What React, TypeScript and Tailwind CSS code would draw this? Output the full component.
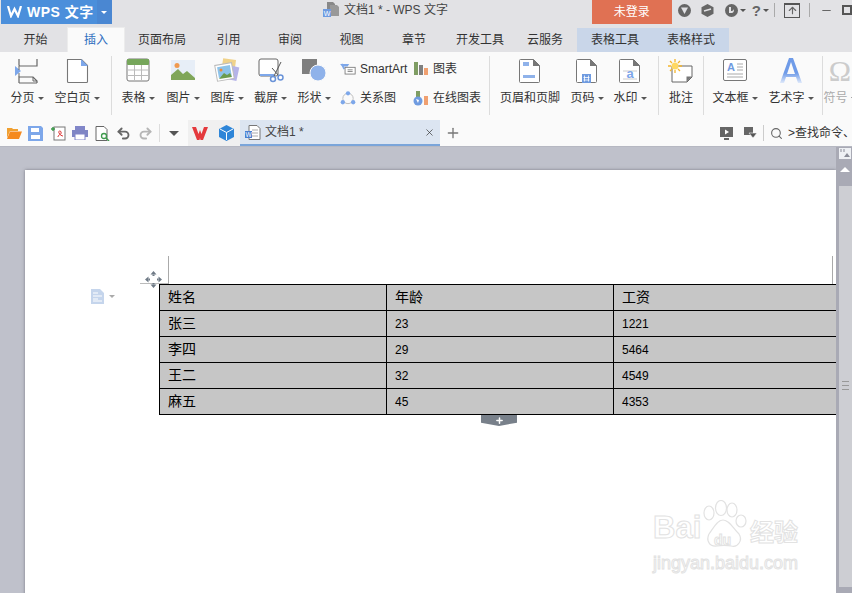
import React from 'react';
import { Plus, X, Search, Undo2, Redo2, ArrowUp, Minus } from 'lucide-react';

const CJK = "font-['Liberation_Sans','Noto_Sans_CJK_SC',sans-serif]";

const tabs = [
  { name: '开始', w: 'w-[63px]' },
  { name: '插入', w: 'w-[58px]', active: true },
  { name: '页面布局', w: 'w-[74px]' },
  { name: '引用', w: 'w-[59px]' },
  { name: '审阅', w: 'w-[64px]' },
  { name: '视图', w: 'w-[59px]' },
  { name: '章节', w: 'w-[66px]' },
  { name: '开发工具', w: 'w-[66px]' },
  { name: '云服务', w: 'w-[64px]' },
  { name: '表格工具', w: 'w-[76px]', context: true },
  { name: '表格样式', w: 'w-[76px]', context: true },
];

const rows = [
  ['姓名', '年龄', '工资'],
  ['张三', '23', '1221'],
  ['李四', '29', '5464'],
  ['王二', '32', '4549'],
  ['麻五', '45', '4353'],
];

function Caret({ className = '' }: { className?: string }) {
  return <span className={`inline-block w-0 h-0 border-x-[3px] border-x-transparent border-t-[3px] border-t-[#555] ${className}`} />;
}

function Ico({ children }: { children: React.ReactNode }) {
  return (
    <svg width="26" height="26" viewBox="0 0 26 26" fill="none">
      {children}
    </svg>
  );
}

function PageBreakIcon() {
  return (
    <Ico>
      <path d="M5 1v6a1 1 0 0 0 1 1h17V1M5 25v-6h14l4 4v2" stroke="#666" strokeWidth="1.2" />
      <path d="M5 25h18M19 19v4h4" stroke="#666" strokeWidth="1" />
      <path d="M1 8l6 5-6 5z" fill="#7da7ea" />
      <path d="M5 8v4M5 15v4" stroke="#666" />
    </Ico>
  );
}

function BlankPageIcon() {
  return (
    <Ico>
      <path d="M3.5 1.5h14l6 6v16a1 1 0 0 1-1 1h-18a1 1 0 0 1-1-1z" fill="#fff" stroke="#777" strokeWidth="1.1" />
      <path d="M17 1l7 7h-7z" fill="#7da7ea" />
    </Ico>
  );
}

function TableIcon() {
  return (
    <Ico>
      <rect x="2" y="1" width="22" height="22" rx="2" fill="#fff" stroke="#777" />
      <rect x="2" y="1" width="22" height="6" rx="1" fill="#76a65b" />
      <path d="M2 12h22M2 17.500h22M9.500 7v16M16.500 7v16" stroke="#bbb" />
    </Ico>
  );
}

function PictureIcon() {
  return (
    <Ico>
      <rect x="1" y="2" width="24" height="20" fill="#e7eef7" />
      <circle cx="7" cy="7.500" r="2.500" fill="#f09a50" />
      <path d="M1 22v-5l7-6 5 5 4-3 8 7v2z" fill="#7fa659" />
    </Ico>
  );
}

function GalleryIcon() {
  return (
    <Ico>
      <rect x="8" y="1" width="13" height="17" fill="#f0d28a" transform="rotate(8 14 9)" />
      <rect x="13" y="8" width="11" height="14" fill="#b5b3e8" transform="rotate(12 18 15)" />
      <rect x="2" y="6" width="17" height="16" fill="#fff" stroke="#bbb" transform="rotate(-10 10 14)" />
      <rect x="4" y="8" width="13" height="11" fill="#8dc3ea" transform="rotate(-10 10 14)" />
      <circle cx="7" cy="12" r="1.500" fill="#ee8b3c" />
      <path d="M5 21l5-6 3 2 3-2 2 4z" fill="#6b9b4e" />
    </Ico>
  );
}

function ScreenshotIcon() {
  return (
    <Ico>
      <rect x="1" y="1" width="19" height="17" rx="2" fill="#fff" stroke="#666" />
      <path d="M2 17h14" stroke="#7da7ea" strokeWidth="2" />
      <path d="M23 4l-7 14M14 10l7 8" stroke="#555" />
      <circle cx="15" cy="21" r="2.500" stroke="#6a93d8" strokeWidth="1.500" fill="#fff" />
      <circle cx="22.500" cy="19.500" r="2.500" stroke="#6a93d8" strokeWidth="1.500" fill="#fff" />
    </Ico>
  );
}

function ShapeIcon() {
  return (
    <Ico>
      <rect x="1" y="1" width="15" height="15" fill="#7f7f7f" />
      <circle cx="17" cy="15" r="8" fill="#8fb2ea" stroke="#fafafa" />
    </Ico>
  );
}

function HeaderFooterIcon() {
  return (
    <Ico>
      <path d="M3.500 1.500h13l6 6v16a1 1 0 0 1-1 1h-18a1 1 0 0 1-1-1v-21a1 1 0 0 1 1-1z" fill="#fff" stroke="#777" />
      <path d="M16 1l7 7h-7z" fill="#777" />
      <rect x="6" y="4" width="6" height="4" fill="#8fb2ea" />
      <rect x="6" y="17" width="12" height="3" fill="#8fb2ea" />
    </Ico>
  );
}

function PageNumberIcon() {
  return (
    <Ico>
      <path d="M3.500 1.500h13l6 6v16a1 1 0 0 1-1 1h-18a1 1 0 0 1-1-1v-21a1 1 0 0 1 1-1z" fill="#fff" stroke="#777" />
      <path d="M16 1l7 7h-7z" fill="#777" />
      <rect x="8" y="16" width="9" height="9" fill="#6f9be0" />
      <path d="M10.500 17.500v6M14.500 17.500v6M9.500 19.500h6M9.500 22h6" stroke="#fff" strokeWidth=".8" />
    </Ico>
  );
}

function WatermarkIcon() {
  return (
    <Ico>
      <path d="M3.500 1.500h13l6 6v16a1 1 0 0 1-1 1h-18a1 1 0 0 1-1-1v-21a1 1 0 0 1 1-1z" fill="#fff" stroke="#777" />
      <path d="M16 1l7 7h-7z" fill="#777" />
      <path d="M6 13h14M6 21h14" stroke="#ccc" />
      <text x="13" y="20" textAnchor="middle" fontSize="13" fontWeight="700" fill="#7da7ea" fontFamily="Liberation Sans">a</text>
    </Ico>
  );
}

function CommentIcon() {
  return (
    <Ico>
      <path d="M4 8h20v11l-5 5H4z" fill="#fff" stroke="#666" />
      <path d="M18.500 24v-5.500H24z" fill="#777" />
      <circle cx="7" cy="8" r="3.500" fill="#ffd862" />
      <path d="M7 1v3M7 12v3M0 8h3M11 8h3M2 3l2 2M10 11l2 2M12 3l-2 2M2 13l2-2" stroke="#f5b52c" strokeWidth="1.300" />
    </Ico>
  );
}

function TextBoxIcon() {
  return (
    <Ico>
      <rect x="1.500" y="1.500" width="23" height="21" rx="1.500" fill="#fff" stroke="#777" />
      <text x="5" y="13" fontSize="11" fontWeight="700" fill="#6f9be0" fontFamily="Liberation Sans">A</text>
      <path d="M15 6h6M15 9h6M15 12h6M5 16h16M5 19h16" stroke="#aaa" />
    </Ico>
  );
}

function WordArtIcon() {
  return (
    <Ico>
      <defs>
        <linearGradient id="wa" x1="0" y1="0" x2="0" y2="1">
          <stop offset="0.600" stopColor="#6f9be8" />
          <stop offset="1" stopColor="#dfe9fa" />
        </linearGradient>
      </defs>
      <path d="M11 0h4l9 25h-4l-2-6H8l-2 6H2zM13 4l-4 12h8z" fill="url(#wa)" />
    </Ico>
  );
}

function SmartArtIcon() {
  return (
    <svg width="19" height="14" viewBox="0 0 19 14" fill="none">
      <path d="M0 1h11l-2 3H3z" fill="#7da7ea" />
      <path d="M2 1l3 6" stroke="#7da7ea" strokeWidth="2" />
      <rect x="6" y="5" width="12" height="8" fill="#fff" stroke="#777" />
      <path d="M9 8h6M9 10h6" stroke="#777" />
    </svg>
  );
}

function RelationIcon() {
  return (
    <svg width="17" height="16" viewBox="0 0 17 16" fill="none">
      <circle cx="8.500" cy="8.500" r="5.500" stroke="#bbb" />
      <circle cx="8.500" cy="3" r="2.300" fill="#7da7ea" />
      <circle cx="3" cy="12.500" r="2.300" fill="#7da7ea" />
      <circle cx="14" cy="12.500" r="2.300" fill="#7da7ea" />
    </svg>
  );
}

function BarsIcon() {
  return (
    <svg width="15" height="14" viewBox="0 0 15 14">
      <rect x="0" y="0" width="4" height="13" fill="#7f9d63" />
      <rect x="5" y="3" width="4" height="10" fill="#808080" />
      <rect x="10" y="6" width="4" height="7" fill="#f0a070" />
    </svg>
  );
}

function OnlineBarsIcon() {
  return (
    <svg width="16" height="16" viewBox="0 0 16 16">
      <rect x="3" y="1" width="4" height="10" fill="#7f9d63" />
      <rect x="11" y="6" width="4" height="9" fill="#f0a070" />
      <circle cx="5" cy="11" r="4.500" fill="#6f9be0" />
      <path d="M3 9l3 1-1 3z" fill="#fff" />
    </svg>
  );
}

function RibbonButton({ w, icon, label, caret = true, muted = false }: { w: string; icon: React.ReactNode; label: string; caret?: boolean; muted?: boolean }) {
  return (
    <div className={`${w} shrink-0 flex flex-col items-center pt-[6px]`}>
      <div className="h-[26px] flex items-center">{icon}</div>
      <div className={`mt-[5px] h-[18px] flex items-center gap-[3px] text-[12px] whitespace-nowrap ${muted ? 'text-[#aaa]' : 'text-[#333]'}`}>
        {label}
        {caret && <Caret />}
      </div>
    </div>
  );
}

function Divider() {
  return <div className="w-px h-[59px] mt-[4px] bg-[#dcdcdc] shrink-0" />;
}

function SmallRow({ icon, label }: { icon: React.ReactNode; label: string }) {
  return (
    <div className="h-[29px] flex items-center gap-[4px] text-[12px] text-[#333] whitespace-nowrap">
      <span className="w-[16px] flex justify-center">{icon}</span>
      {label}
    </div>
  );
}

function OpenIcon() {
  return (
    <svg width="16" height="14" viewBox="0 0 16 14">
      <path d="M1 2h5l1 1h5v2H4l-3 7z" fill="#f0a030" />
      <path d="M4 5.500h12L13 13H1z" fill="#f58a1f" />
    </svg>
  );
}

function SaveIcon() {
  return (
    <svg width="15" height="15" viewBox="0 0 15 15">
      <path d="M0 0h13l2 2v13H0z" fill="#7da7ea" />
      <rect x="3" y="2" width="8" height="4" fill="#fff" />
      <rect x="3" y="9" width="9" height="4" fill="#fff" />
    </svg>
  );
}

function PdfIcon() {
  return (
    <svg width="16" height="15" viewBox="0 0 16 15" fill="none">
      <rect x="4" y="1" width="11" height="13" fill="#fff" stroke="#777" />
      <path d="M3 1v4M1 3h4" stroke="#3f9a4d" strokeWidth="1.500" />
      <path d="M8 11c0-3 4-2 3-5-.5-2-3-1-2 1 1 2 3 3 4 3" stroke="#d33" />
    </svg>
  );
}

function PrintIcon() {
  return (
    <svg width="16" height="14" viewBox="0 0 16 14">
      <rect x="3" y="0" width="10" height="4" fill="#8186c8" />
      <rect x="0" y="4" width="16" height="7" fill="#7f85c4" />
      <rect x="3" y="8" width="10" height="6" fill="#fff" stroke="#8186c8" />
    </svg>
  );
}

function PreviewIcon() {
  return (
    <svg width="15" height="15" viewBox="0 0 15 15" fill="none">
      <path d="M1 .500h8l3 3v11H1z" fill="#fff" stroke="#666" />
      <circle cx="9" cy="10" r="2.500" stroke="#3f9a4d" strokeWidth="1.300" />
      <path d="M11 12l3 3" stroke="#3f9a4d" strokeWidth="1.500" />
    </svg>
  );
}

function WLogo() {
  return (
    <svg width="16" height="13" viewBox="0 0 16 13">
      <path d="M0 0h4l2.500 7L8 3l1.500 4L12 0h4l-5 13H8.500L8 11l-.5 2H5z" fill="#e4393c" />
    </svg>
  );
}

function CubeIcon() {
  return (
    <svg width="15" height="16" viewBox="0 0 15 16">
      <path d="M7.500 0L15 4v8l-7.500 4L0 12V4z" fill="#2f86d8" />
      <path d="M1 4l6.500 3.500L14 4M7.500 7.500V15" stroke="#fff" fill="none" />
    </svg>
  );
}

function DocTabIcon() {
  return (
    <svg width="16" height="15" viewBox="0 0 16 15" fill="none">
      <path d="M4 .500h8l3 3v11H4z" fill="#fff" stroke="#777" />
      <path d="M7 5h6M7 8h6M7 11h6" stroke="#aaa" />
      <rect x="0" y="6" width="7" height="7" fill="#4a7fd0" />
      <text x="3.500" y="12" textAnchor="middle" fontSize="6.500" fill="#fff" fontFamily="Liberation Sans">W</text>
    </svg>
  );
}

function TitleDocIcon() {
  return (
    <svg width="16" height="16" viewBox="0 0 16 16">
      <path d="M4 0h6l2 2v6H4z" fill="#888" />
      <path d="M7 3h7l2 2v9H7z" fill="#999" />
      <rect x="0" y="7" width="8" height="8" fill="#6f9be0" />
      <text x="4" y="14" textAnchor="middle" fontSize="7" fill="#fff" fontFamily="Liberation Sans">W</text>
    </svg>
  );
}

function MoveHandle() {
  return (
    <svg width="17" height="17" viewBox="0 0 17 17" fill="#6f7a86">
      <path d="M8.500 0l3 3.500h-6zM8.500 17l3-3.500h-6zM0 8.500l3.500-3v6zM17 8.500l-3.500-3v6z" />
      <path d="M8.500 5v7M5 8.500h7" stroke="#fff" strokeWidth="0" />
      <rect x="7.500" y="3.500" width="2" height="1.500" />
      <rect x="7.500" y="12" width="2" height="1.500" />
      <rect x="3.500" y="7.500" width="1.500" height="2" />
      <rect x="12" y="7.500" width="1.500" height="2" />
    </svg>
  );
}

export default function App() {
  return (
    <div className={`${CJK} w-[852px] h-[593px] overflow-hidden flex flex-col bg-[#e2e2e5] text-[12px]`}>
      {/* Title bar */}
      <div className="h-[28px] flex items-start shrink-0">
        <div className="w-[111px] h-[24px] ml-px flex bg-[#4b8fdb] text-white">
          <div className="w-[96px] flex items-center gap-[5px] pl-[6px] text-[14px] font-bold tracking-[0.5px] whitespace-nowrap">
            <svg width="15" height="12" viewBox="0 0 15 12" fill="none">
              <path d="M1 0l3 10 3.500-7L11 10l3-10" stroke="#fff" strokeWidth="2.200" />
            </svg>
            WPS 文字
          </div>
          <div className="flex-1 bg-[#4a87d2] flex items-center justify-center">
            <span className="w-0 h-0 border-x-[3px] border-x-transparent border-t-[3px] border-t-white" />
          </div>
        </div>
        <div className="ml-[211px] h-[20px] flex items-center gap-[5px] text-[12px] text-[#444] whitespace-nowrap">
          <TitleDocIcon />
          文档1 * - WPS 文字
        </div>
        <div className="ml-[144px] w-[80px] h-[24px] bg-[#e07153] text-white flex items-center justify-center text-[12px]">未登录</div>
        <div className="flex items-center h-[20px] text-[#666]">
          <svg className="ml-[6px]" width="13" height="13" viewBox="0 0 13 13">
            <circle cx="6.500" cy="6.500" r="6.500" fill="#666" />
            <path d="M3 3.500h7L6.500 10z" fill="#e2e2e5" />
          </svg>
          <svg className="ml-[10px]" width="13" height="13" viewBox="0 0 13 13">
            <path d="M6.500 0l6 3.200v6.600l-6 3.200-6-3.200V3.200z" fill="#666" />
            <path d="M3 7l7-2" stroke="#e2e2e5" strokeWidth="1.500" />
          </svg>
          <svg className="ml-[11px]" width="13" height="13" viewBox="0 0 13 13">
            <circle cx="6.500" cy="6.500" r="6.500" fill="#666" />
            <path d="M4 3v6h2c3 0 3-2 3-4-1 2-2 2-3 2V3z" fill="#e2e2e5" />
          </svg>
          <Caret className="ml-[2px]" />
          <span className="ml-[6px] text-[15px] font-bold leading-none">?</span>
          <Caret className="ml-[2px]" />
          <div className="w-px h-[14px] bg-[#aaa] ml-[5px]" />
          <div className="ml-[9px] w-[16px] h-[15px] border border-[#555] border-t-2 flex items-center justify-center">
            <ArrowUp size={11} strokeWidth={2.500} />
          </div>
          <div className="w-px h-[14px] bg-[#aaa] ml-[9px]" />
          <Minus size={13} strokeWidth={2} className="ml-[10px]" />
          <div className="ml-[9px] w-[10px] h-[10px] border-2 border-[#555] shrink-0" />
        </div>
      </div>

      {/* Tabs */}
      <div className="h-[24px] flex pl-[4px] shrink-0 text-[12px] text-[#333]">
        {tabs.map((t) => (
          <div
            key={t.name}
            className={`${t.w} h-[24px] flex items-center justify-center ${t.active ? 'bg-[#fafafa] text-[#2f6fc0] border-x border-t border-[#ececec] -mt-px h-[25px]' : ''} ${t.context ? 'bg-[#c9d6e9]' : ''}`}
          >
            {t.name}
          </div>
        ))}
      </div>

      {/* Ribbon */}
      <div className="h-[68px] bg-[#fafafa] flex pl-[2px] shrink-0">
        <RibbonButton w="w-[50px]" icon={<PageBreakIcon />} label="分页" />
        <RibbonButton w="w-[50px]" icon={<BlankPageIcon />} label="空白页" />
        <div className="w-[9px] shrink-0" />
        <Divider />
        <div className="w-[4px] shrink-0" />
        <RibbonButton w="w-[44px]" icon={<TableIcon />} label="表格" />
        <div className="w-px shrink-0" />
        <RibbonButton w="w-[44px]" icon={<PictureIcon />} label="图片" />
        <RibbonButton w="w-[44px]" icon={<GalleryIcon />} label="图库" />
        <RibbonButton w="w-[43px]" icon={<ScreenshotIcon />} label="截屏" />
        <RibbonButton w="w-[44px]" icon={<ShapeIcon />} label="形状" />
        <div className="w-[77px] shrink-0 pl-[4px] pt-[2px]">
          <SmallRow icon={<SmartArtIcon />} label="SmartArt" />
          <SmallRow icon={<RelationIcon />} label="关系图" />
        </div>
        <div className="w-[76px] shrink-0 pl-[0px] pt-[2px]">
          <SmallRow icon={<BarsIcon />} label="图表" />
          <SmallRow icon={<OnlineBarsIcon />} label="在线图表" />
        </div>
        <Divider />
        <RibbonButton w="w-[80px]" icon={<HeaderFooterIcon />} label="页眉和页脚" caret={false} />
        <RibbonButton w="w-[34px]" icon={<PageNumberIcon />} label="页码" />
        <RibbonButton w="w-[52px]" icon={<WatermarkIcon />} label="水印" />
        <div className="w-[2px] shrink-0" />
        <Divider />
        <RibbonButton w="w-[44px]" icon={<CommentIcon />} label="批注" caret={false} />
        <Divider />
        <RibbonButton w="w-[62px]" icon={<TextBoxIcon />} label="文本框" />
        <RibbonButton w="w-[50px]" icon={<WordArtIcon />} label="艺术字" />
        <div className="w-[6px] shrink-0" />
        <Divider />
        <RibbonButton
          w="w-[34px]"
          label="符号"
          muted
          icon={<span className="text-[30px] leading-none text-[#ccc] font-['Liberation_Serif',serif]">Ω</span>}
        />
      </div>

      {/* Quick access + document tabs */}
      <div className="h-[26px] bg-[#fafafa] flex items-stretch shrink-0">
        <div className="w-[188px] flex items-center shrink-0 pl-[6px] text-[#777]">
          <OpenIcon />
          <span className="ml-[6px] flex"><SaveIcon /></span>
          <span className="ml-[7px] flex"><PdfIcon /></span>
          <span className="ml-[6px] flex"><PrintIcon /></span>
          <span className="ml-[7px] flex"><PreviewIcon /></span>
          <Undo2 size={15} strokeWidth={3} className="ml-[6px] text-[#666]" />
          <Redo2 size={15} strokeWidth={3} className="ml-[7px] text-[#b5b5b5]" />
          <div className="w-px h-[18px] bg-[#ddd] ml-[6px]" />
          <span className="ml-[9px] w-0 h-0 border-x-[5px] border-x-transparent border-t-[5px] border-t-[#555]" />
        </div>
        <div className="w-[52px] bg-[#f0f0f0] flex items-center shrink-0 pl-[4px] gap-[11px]">
          <WLogo />
          <CubeIcon />
        </div>
        <div className="w-[200px] bg-[#dce5f1] border-b-2 border-[#7aa5da] flex items-center pl-[5px] pr-[5px] gap-[4px] text-[#444] shrink-0">
          <DocTabIcon />
          <span className="flex-1">文档1 *</span>
          <X size={11} strokeWidth={1.500} className="text-[#333]" />
        </div>
        <div className="w-[26px] flex items-center justify-center shrink-0">
          <Plus size={16} strokeWidth={2} className="text-[#777]" />
        </div>
        <div className="flex-1 flex items-center justify-end min-w-0 overflow-hidden whitespace-nowrap">
          <svg width="13" height="13" viewBox="0 0 13 13">
            <rect x="0" y="0" width="13" height="10" fill="#666" />
            <path d="M5 2.500l4 2.500-4 2.500z" fill="#fff" />
            <path d="M4 12h5" stroke="#666" strokeWidth="2" />
          </svg>
          <svg className="ml-[11px]" width="13" height="12" viewBox="0 0 13 12">
            <path d="M0 0h9v8H0z" fill="#666" />
            <path d="M5 6h8l-4 5z" fill="#555" stroke="#fafafa" strokeWidth=".6" />
          </svg>
          <div className="w-px h-[16px] bg-[#ccc] ml-[6px]" />
          <Search size={13} className="ml-[6px] text-[#666]" />
          <span className="ml-[5px] w-[64px] overflow-hidden text-[#333]">&gt;查找命令、</span>
        </div>
      </div>

      {/* Workspace */}
      <div className="flex-1 min-h-0 flex bg-[#bfc1cb] border-t border-[#b6b8c2]">
        <div className="w-[836px] shrink-0 pl-[25px] pt-[23px] overflow-hidden">
          <div className="relative w-[811px] h-[500px] bg-white shadow-[0_0_3px_rgba(90,90,100,0.7)] pt-[114px] pl-[134px]">
            {/* crop marks */}
            <div className="absolute left-[143px] top-[86px] w-px h-[28px] bg-[#aaa]" />
            <div className="absolute left-[115px] top-[113px] w-[28px] h-px bg-[#bbb]" />
            <div className="absolute left-[807px] top-[86px] w-px h-[28px] bg-[#aaa]" />
            {/* table handle */}
            <div className="absolute left-[120px] top-[101px]"><MoveHandle /></div>
            {/* paragraph marker */}
            <div className="absolute left-[66px] top-[119px] flex items-center gap-[5px]">
              <svg width="13" height="15" viewBox="0 0 13 15">
                <path d="M0 0h9l4 4v11H0z" fill="#c5d5ec" />
                <path d="M2 4h5M2 7h9M2 10h5M2 12h9" stroke="#fff" />
              </svg>
              <span className="w-0 h-0 border-x-[3px] border-x-transparent border-t-[3px] border-t-[#aaa]" />
            </div>

            <div className="w-[677px] border-t border-l border-black bg-[#c6c6c6] text-black">
              {rows.map((row) => (
                <div key={row[0]} className="grid grid-cols-[227px_227px_223px] h-[26px] border-b border-black">
                  {row.map((cell, i) => (
                    <div key={i} className={`pl-[8px] flex items-center ${/\d/.test(cell) ? 'text-[12px]' : 'text-[14px]'} ${i < 2 ? 'border-r border-black' : ''}`}>
                      {cell}
                    </div>
                  ))}
                </div>
              ))}
            </div>

            {/* add row handle */}
            <div className="absolute left-[456px] top-[245px] w-[36px] h-[11px] bg-[#78808a] flex items-center justify-center [clip-path:polygon(0_0,100%_0,100%_70%,50%_100%,0_70%)]">
              <Plus size={9} strokeWidth={4} className="text-white" />
            </div>

            {/* baidu watermark */}
            <div className="absolute left-[628px] top-[330px] w-[156px] h-[76px] text-white [-webkit-text-stroke:1px_#e2e2e2] select-none">
              <svg className="absolute left-[50px] top-0" width="46" height="50" viewBox="0 0 46 50" fill="#fff" stroke="#e2e2e2" strokeWidth="1.200">
                <ellipse cx="6" cy="13" rx="5" ry="7" />
                <ellipse cx="18" cy="8" rx="5.500" ry="7.500" />
                <ellipse cx="29" cy="10" rx="5" ry="7" />
                <ellipse cx="38" cy="21" rx="5" ry="6" />
                <path d="M20 20c6 0 10 8 16 14 4 6-1 14-8 12-5-1-9-1-14 0-8 1-11-6-8-12 4-5 8-14 14-14z" />
              </svg>
              <span className="absolute left-0 top-[12px] text-[31px] font-bold leading-none font-['Liberation_Sans',sans-serif]">Bai</span>
              <span className="absolute left-[61px] top-[33px] text-[14px] font-bold leading-none font-['Liberation_Sans',sans-serif]">du</span>
              <span className="absolute left-[97px] top-[21px] text-[24px] font-bold leading-none">经验</span>
              <span className="absolute left-0 top-[54px] text-[18px] leading-none whitespace-nowrap font-['Liberation_Sans',sans-serif]">jingyan.baidu.com</span>
            </div>
          </div>
        </div>

        {/* Scrollbar */}
        <div className="w-[16px] shrink-0 flex flex-col bg-[#a9aab5]">
          <div className="h-[39px] flex flex-col items-center pl-[1px] pt-[1px] shrink-0">
            <svg width="12" height="11" viewBox="0 0 12 11">
              <rect width="12" height="11" fill="#eef0f4" />
              <path d="M2 1v3M5 1v3" stroke="#8a8c98" />
              <path d="M5 9l3-4 3 4z" fill="#8a8c98" />
            </svg>
            <span className="mt-[8px] w-0 h-0 border-x-[5px] border-x-transparent border-b-[5px] border-b-white" />
          </div>
          <div className="flex-1 ml-[3px] bg-[#cdced3] flex flex-col items-center pt-[195px] gap-[3px]">
            <span className="w-[7px] h-px bg-[#999]" />
            <span className="w-[7px] h-px bg-[#999]" />
            <span className="w-[7px] h-px bg-[#999]" />
          </div>
          <div className="h-[6px] shrink-0" />
        </div>
      </div>
    </div>
  );
}
